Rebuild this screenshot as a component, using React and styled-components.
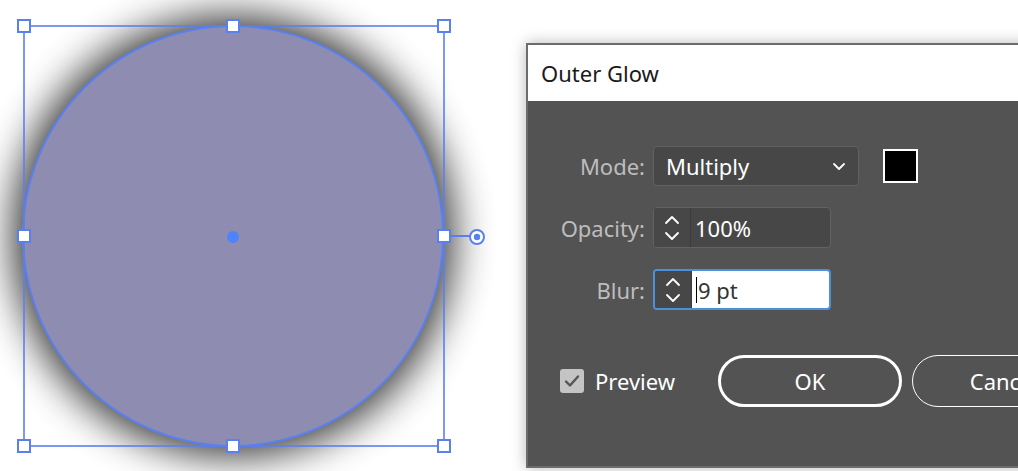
import styled, { createGlobalStyle } from "styled-components";

const GlobalStyle = createGlobalStyle`
  html, body {
    margin: 0;
    padding: 0;
    background: #ffffff;
  }
  body {
    font-family: "Noto Sans", "Open Sans", sans-serif;
  }
`;

const BLUE = "#5a80f0";
const handles = [
  [24, 26], [233, 26], [444, 26],
  [24, 236], [24, 446], [233, 446], [444, 446],
];

function ArtSelection() {
  return (
    <svg width="526" height="471" viewBox="0 0 526 471">
      <defs>
        <filter id="glow" x="-30%" y="-30%" width="160%" height="160%">
          <feGaussianBlur stdDeviation="20" />
        </filter>
      </defs>
      <circle cx="233" cy="236" r="220" fill="#000" opacity="0.8" filter="url(#glow)" />
      <circle cx="233" cy="236" r="210" fill="#8e8db1" stroke={BLUE} strokeWidth="2" />
      <rect x="24" y="26" width="420" height="420" fill="none" stroke={BLUE} strokeWidth="1.6" />
      {handles.map(([x, y]) => (
        <rect key={`${x}-${y}`} x={x - 6} y={y - 6} width="12" height="12" fill="#fff" stroke={BLUE} strokeWidth="2" />
      ))}
      <line x1="450" y1="236" x2="470" y2="236" stroke={BLUE} strokeWidth="2" />
      <rect x="438" y="230" width="12" height="12" fill="#fff" stroke={BLUE} strokeWidth="2" />
      <circle cx="477" cy="237" r="7" fill="#fff" stroke={BLUE} strokeWidth="2" />
      <circle cx="477" cy="237" r="3.2" fill={BLUE} />
      <circle cx="233" cy="237" r="6" fill="#4f82ff" />
    </svg>
  );
}

function Stepper() {
  return (
    <StepBox>
      <svg width="18" height="30" viewBox="0 0 18 30">
        <path d="M3 10 L9 4 L15 10" fill="none" stroke="#fff" strokeWidth="1.8" strokeLinecap="round" strokeLinejoin="round" />
        <path d="M3 20 L9 26 L15 20" fill="none" stroke="#fff" strokeWidth="1.8" strokeLinecap="round" strokeLinejoin="round" />
      </svg>
    </StepBox>
  );
}

export default function App() {
  return (
    <>
      <GlobalStyle />
      <Page>
        <Canvas>
          <ArtSelection />
        </Canvas>
        <Dialog>
          <TitleBar>Outer Glow</TitleBar>
          <Body>
            <Form>
              <Label>Mode:</Label>
              <ControlRow>
                <Select>
                  <span>Multiply</span>
                  <svg width="14" height="10" viewBox="0 0 14 10">
                    <path d="M2 3 L7 8 L12 3" fill="none" stroke="#fff" strokeWidth="1.8" strokeLinecap="round" strokeLinejoin="round" />
                  </svg>
                </Select>
                <Swatch />
              </ControlRow>
              <Label>Opacity:</Label>
              <ControlRow>
                <NumberField>
                  <Stepper />
                  <FieldText>100%</FieldText>
                </NumberField>
              </ControlRow>
              <Label>Blur:</Label>
              <ControlRow>
                <NumberField $focused>
                  <Stepper />
                  <FieldText $focused>
                    <Caret />9 pt
                  </FieldText>
                </NumberField>
              </ControlRow>
            </Form>
            <Footer>
              <Check>
                <CheckBox>
                  <svg width="16" height="14" viewBox="0 0 16 14">
                    <path d="M2 7.5 L6 11.5 L14 2.5" fill="none" stroke="#555" strokeWidth="2.4" strokeLinecap="round" strokeLinejoin="round" />
                  </svg>
                </CheckBox>
                Preview
              </Check>
              <Buttons>
                <Button $primary>OK</Button>
                <Button>Cancel</Button>
              </Buttons>
            </Footer>
          </Body>
        </Dialog>
      </Page>
    </>
  );
}

const Page = styled.div`
  display: flex;
  width: 1018px;
  height: 471px;
  overflow: hidden;
  background: #fff;
`;

const Canvas = styled.div`
  flex: 0 0 526px;
  height: 471px;
  & > svg {
    display: block;
  }
`;

const Dialog = styled.div`
  flex: 0 0 auto;
  width: 600px;
  height: 421px;
  margin-top: 43px;
  border: 2px solid #6c6c6c;
  border-right: none;
  display: flex;
  flex-direction: column;
  box-shadow: 0 0 14px rgba(0, 0, 0, 0.28);
`;

const TitleBar = styled.div`
  height: 56px;
  flex: 0 0 56px;
  background: #fff;
  color: #1a1a1a;
  font-size: 22px;
  display: flex;
  align-items: center;
  padding-left: 13px;
`;

const Body = styled.div`
  flex: 1;
  background: #535353;
  padding-top: 45px;
  display: flex;
  flex-direction: column;
`;

const Form = styled.div`
  display: grid;
  grid-template-columns: 117px auto;
  column-gap: 8px;
  row-gap: 21px;
  align-items: center;
`;

const Label = styled.div`
  text-align: right;
  color: #bdbdbd;
  font-size: 22px;
`;

const ControlRow = styled.div`
  display: flex;
  align-items: center;
  gap: 24px;
`;

const Select = styled.div`
  box-sizing: border-box;
  width: 206px;
  height: 40px;
  background: #474747;
  border: 1px solid #626262;
  border-radius: 4px;
  display: flex;
  align-items: center;
  justify-content: space-between;
  padding: 0 12px 0 12px;
  color: #fff;
  font-size: 22px;
`;

const Swatch = styled.div`
  width: 31px;
  height: 30px;
  background: #000;
  border: 2px solid #fff;
`;

const NumberField = styled.div`
  box-sizing: border-box;
  width: 178px;
  height: 41px;
  display: flex;
  border: ${(p) => (p.$focused ? "2px solid #4d8fdd" : "1px solid #626262")};
  border-radius: 4px;
  overflow: hidden;
  background: #474747;
`;

const StepBox = styled.div`
  flex: 0 0 36px;
  display: flex;
  align-items: center;
  justify-content: center;
  border-right: 1px solid #3c3c3c;
  background: #474747;
`;

const FieldText = styled.div`
  flex: 1;
  display: flex;
  align-items: center;
  padding-left: 4px;
  font-size: 22px;
  color: ${(p) => (p.$focused ? "#333" : "#fff")};
  background: ${(p) => (p.$focused ? "#fff" : "transparent")};
`;

const Caret = styled.span`
  display: inline-block;
  width: 1px;
  height: 26px;
  background: #000;
  margin-right: 1px;
`;

const Footer = styled.div`
  display: flex;
  align-items: center;
  margin-top: 45px;
  padding-left: 32px;
`;

const Check = styled.label`
  flex: 0 0 158px;
  display: flex;
  align-items: center;
  gap: 11px;
  color: #fff;
  font-size: 22px;
`;

const CheckBox = styled.span`
  width: 24px;
  height: 24px;
  border-radius: 3px;
  background: #c4c4c4;
  display: flex;
  align-items: center;
  justify-content: center;
`;

const Buttons = styled.div`
  flex: 0 0 auto;
  display: flex;
  gap: 10px;
`;

const Button = styled.button`
  box-sizing: border-box;
  width: 184px;
  height: 52px;
  border-radius: 26px;
  background: transparent;
  border: ${(p) => (p.$primary ? "3px" : "1.5px")} solid #fff;
  color: #fff;
  font-family: inherit;
  font-size: 22px;
  padding: 0;
`;
